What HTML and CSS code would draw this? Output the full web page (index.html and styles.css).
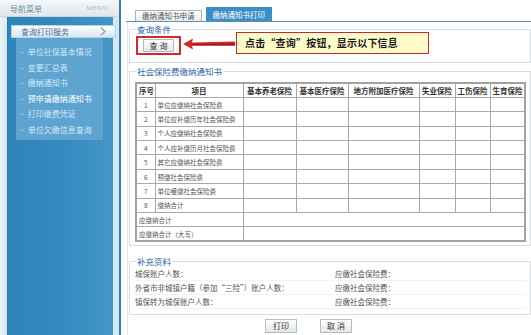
FILE: index.html
```html
<!DOCTYPE html>
<html lang="zh">
<head>
<meta charset="utf-8">
<link rel="stylesheet" href="styles.css">
</head>
<body>
<div class="page">
  <aside class="side">
    <div class="side-head"><span class="side-title">导航菜单</span><span class="side-menu">MENU</span></div>
    <div class="side-body">
      <div class="menu-top"><span>查询打印服务</span><svg class="chev" width="6" height="9" viewBox="0 0 6 9"><path d="M0.8 0.8 L5 4.5 L0.8 8.2" fill="none" stroke="#8aa0b0" stroke-width="1.2"/></svg></div>
      <ul class="submenu">
        <li>单位社保基本情况</li>
        <li>变更汇总表</li>
        <li>缴纳通知书</li>
        <li class="on">预申请缴纳通知书</li>
        <li>打印缴费凭证</li>
        <li>单位欠缴信息查询</li>
      </ul>
    </div>
  </aside>
  <main class="main">
    <div class="tabs">
      <span class="tab">缴纳通知书申请</span>
      <span class="tab active">缴纳通知书打印</span>
    </div>
    <div class="content">
      <fieldset class="box query">
        <legend>查询条件</legend>
        <div class="query-row">
          <span class="mark"><button class="btn">查 询</button></span>
          <svg class="arrow" width="52" height="12" viewBox="0 0 52 12"><path d="M0 6 L10 0.5 L9 4.5 L52 3.5 L52 7.5 L9 7.5 L10 11.5 Z" fill="#d6282b"/><path d="M9 6 L52 5.5 L52 7.5 L9 7.5 Z" fill="#9e1a1c"/></svg>
          <span class="callout">点击“查询”按钮，显示以下信息</span>
        </div>
      </fieldset>
      <fieldset class="box notice">
        <legend>社会保险费缴纳通知书</legend>
        <table class="grid">
          <colgroup>
            <col style="width:19px"><col style="width:88px"><col style="width:53px"><col style="width:52px"><col style="width:71px"><col style="width:36px"><col style="width:35px"><col style="width:35px">
          </colgroup>
          <thead>
            <tr><th>序号</th><th>项目</th><th>基本养老保险</th><th>基本医疗保险</th><th>地方附加医疗保险</th><th>失业保险</th><th>工伤保险</th><th>生育保险</th></tr>
          </thead>
          <tbody>
            <tr><td class="n">1</td><td>单位应缴纳社会保险费</td><td></td><td></td><td></td><td></td><td></td><td></td></tr>
            <tr><td class="n">2</td><td>单位应补缴历年社会保险费</td><td></td><td></td><td></td><td></td><td></td><td></td></tr>
            <tr><td class="n">3</td><td>个人应缴纳社会保险费</td><td></td><td></td><td></td><td></td><td></td><td></td></tr>
            <tr><td class="n">4</td><td>个人应补缴历月社会保险费</td><td></td><td></td><td></td><td></td><td></td><td></td></tr>
            <tr><td class="n">5</td><td>其它应缴纳社会保险费</td><td></td><td></td><td></td><td></td><td></td><td></td></tr>
            <tr><td class="n">6</td><td>预缴社会保险费</td><td></td><td></td><td></td><td></td><td></td><td></td></tr>
            <tr><td class="n">7</td><td>单位缓缴社会保险费</td><td></td><td></td><td></td><td></td><td></td><td></td></tr>
            <tr><td class="n">8</td><td>缴纳合计</td><td></td><td></td><td></td><td></td><td></td><td></td></tr>
            <tr><td colspan="2">应缴纳合计</td><td colspan="6"></td></tr>
            <tr><td colspan="2">应缴纳合计（大写）</td><td colspan="6"></td></tr>
          </tbody>
        </table>
      </fieldset>
      <fieldset class="box extra">
        <legend>补充资料</legend>
        <div class="info">
          <div class="info-row"><span class="l">城保账户人数：</span><span class="r">应缴社会保险费：</span></div>
          <div class="info-row"><span class="l">外省市非城镇户籍（参加“三险”）账户人数：</span><span class="r">应缴社会保险费：</span></div>
          <div class="info-row"><span class="l">镇保转为城保账户人数：</span><span class="r">应缴社会保险费：</span></div>
        </div>
      </fieldset>
      <div class="actions">
        <button class="btn">打印</button>
        <button class="btn">取 消</button>
      </div>
    </div>
  </main>
</div>
</body>
</html>
```

FILE: styles.css
```css
* { box-sizing: border-box; }
html, body { margin: 0; padding: 0; }
body {
  width: 531px; height: 335px; overflow: hidden;
  font-family: "Noto Sans CJK SC", "Noto Sans", sans-serif;
  font-size: 8px; color: #444; background: #fff;
}
.page { display: flex; height: 335px; }

/* sidebar */
.side {
  width: 121px; flex: none;
  background: linear-gradient(to right, #eef5fa 0, #d5e7f3 7px, #d5e7f3 100%);
  border-right: 2px solid #2f7fb0;
  display: flex; flex-direction: column;
}
.side-head {
  height: 17px; display: flex; align-items: center; justify-content: space-between;
  padding: 0 11px 0 10px;
  background: linear-gradient(#f6f8fa, #dfe6eb);
  border-bottom: 1px solid #c7d6e0;
}
.side-title { color: #6e8ea4; font-size: 8px; }
.side-menu { color: #a9b6c0; font-size: 7px; font-family: "Liberation Serif", serif; letter-spacing: 0.3px; }
.side-body {
  flex: 1; margin: 0 6px 0 7px;
  background: linear-gradient(to right, #2e85ba, #3489bf 50%, #4496c9);
  border-left: 1px solid #2878aa;
  padding-top: 8px;
}
.menu-top {
  height: 13px; margin: 0 -3px 0 3px;
  display: flex; align-items: center; justify-content: space-between;
  padding: 0 9px 0 9px;
  background: linear-gradient(#ffffff, #d8e6f0);
  border: 1px solid #b8d0e2;
  color: #3f6f9c; font-size: 8px;
}
.chev { flex: none; }
.submenu {
  list-style: none; margin: 0 10px 0 8px; padding: 6px 0 6px 5px;
  background: #5ea4d1;
  height: 102px;
}
.submenu li {
  height: 15.6px; line-height: 15.6px; color: #d4e7f4; font-size: 8px;
  white-space: nowrap;
}
.submenu li::before { content: "-"; margin-right: 4px; color: #cfe2ef; }
.submenu li.on { color: #ffffff; }

/* main */
.main { flex: 1; display: flex; flex-direction: column; padding: 8px 3px 0 5px; }
.tabs {
  display: flex; align-items: flex-end; gap: 4px; height: 14px;
  padding-left: 9px; border-bottom: 1px solid #5b90b3;
}
.tab {
  height: 11px; padding: 0 6px; line-height: 10px;
  border: 1px solid #a9b3ba; border-bottom: none;
  background: linear-gradient(#ffffff, #e8ecef);
  color: #555; font-size: 7.5px;
}
.tab.active {
  height: 14px; line-height: 13px; background: #3d8ec6; border-color: #3d8ec6; color: #fff;
}
.content {
  flex: 1; border-left: 1px solid #dfe4e8; margin-left: 1px;
  padding: 2px 0 0 1px; display: flex; flex-direction: column;
}
.box {
  margin: 0; border: 1px solid #d9dde0; padding: 0 4px 4px 5px; min-width: 0;
}
.box legend {
  padding: 0 1px; margin-left: 1px; color: #2d63a6; font-size: 8.5px; line-height: 11px;
}
.query { padding: 1px 4px 7px 5px; }
.query-row { display: flex; align-items: center; height: 19px; }
.mark {
  display: flex; border: 2px solid #d2292d; padding: 1px 5px; margin-left: 1px;
}
.btn {
  font-family: "Noto Sans CJK SC", sans-serif; font-size: 8px; color: #333;
  height: 14px; padding: 0; line-height: 12px; white-space: nowrap;
  border: 1px solid #b6bcc0; background: linear-gradient(#ffffff, #e4e7ea);
  border-radius: 0;
}
.mark .btn { width: 31px; height: 13px; }
.arrow { margin: 0 1px 4px 2px; flex: none; }
.callout {
  width: 193px; height: 22px; margin-top: -6px; flex: none;
  border: 1px solid #c6282c; background: #fdfbc9;
  font-weight: bold; font-size: 10px; color: #1b1b1b;
  padding-left: 8px; line-height: 19px; letter-spacing: 0.2px;
  font-family: "Noto Sans CJK SC", serif;
}
.notice { margin-top: 3px; padding: 5px 4px 3px 5px; }
.grid {
  border-collapse: collapse; table-layout: fixed; width: 389px;
  border: 2px solid #a2a2a2;
}
.grid th, .grid td {
  border: 1px solid #a9a9a9; height: 14.4px; padding: 0 2px;
  white-space: nowrap; overflow: hidden;
}
.grid th { font-weight: bold; font-size: 7.5px; color: #333; font-family: "Noto Sans CJK SC", serif; }
.grid td { font-size: 6.5px; color: #555; }
.grid td.n { text-align: center; }
.extra { margin-top: 10px; padding: 0 4px 5px 5px; }
.info-row { display: flex; height: 14px; align-items: center; border-bottom: 1px solid #f2f2f2; }
.info-row .l { width: 200px; font-size: 7.5px; color: #555; }
.info-row .r { font-size: 7.5px; color: #555; }
.actions {
  display: flex; gap: 23px; padding: 4px 0 0 136px;
}
.actions .btn { width: 32px; }
```
